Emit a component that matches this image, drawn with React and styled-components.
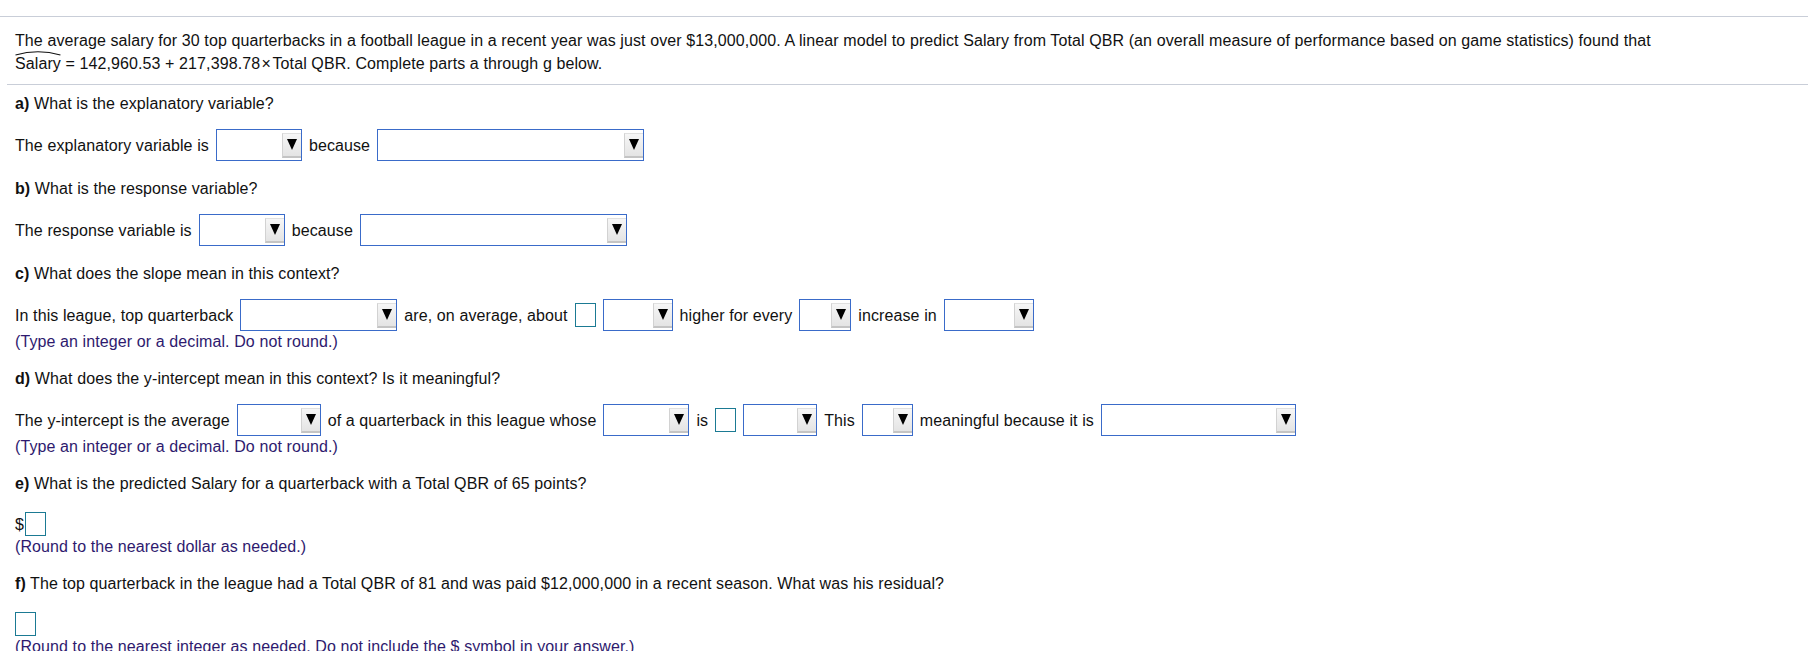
import React from "react";
import styled, { createGlobalStyle } from "styled-components";

const GlobalStyle = createGlobalStyle`
  body {
    margin: 0;
    background: #fff;
    font-family: "Liberation Sans", Arial, sans-serif;
    font-size: 16px;
    letter-spacing: 0.1px;
    color: #111;
  }
`;

// the question panel is a scroll viewport, cut at the bottom
const Viewport = styled.div`
  box-sizing: border-box;
  height: 651px;
  padding-top: 16px;
  overflow: hidden;
`;

const Page = styled.div`
  border-top: 1px solid #c9ced8;
`;

const Question = styled.div`
  margin-left: 7px;
  padding: 12px 8px 9px 8px;
  line-height: 23px;
  border-bottom: 1px solid #c9ced8;
`;

const Hatted = styled.span`
  position: relative;
  display: inline-block;
`;

const Hat = styled.svg`
  position: absolute;
  left: 0;
  top: -2px;
  width: 100%;
  height: 6px;
  overflow: visible;
`;

const Parts = styled.div`
  display: flex;
  flex-direction: column;
  gap: 18px;
  padding: 9px 14px 0 15px;
`;

const Part = styled.div`
  display: flex;
  flex-direction: column;
`;

const Heading = styled.div`
  line-height: 19px;
  b {
    font-weight: bold;
  }
`;

const Row = styled.div`
  display: flex;
  align-items: center;
  gap: ${(p) => (p.$tight ? 1 : 7)}px;
  height: ${(p) => (p.$compact ? 24 : 32)}px;
  margin-top: ${(p) => (p.$compact ? 19 : 16)}px;
  white-space: nowrap;
`;

const Text = styled.span`
  line-height: 19px;
`;

const Note = styled.div`
  line-height: 19px;
  margin-top: 1px;
  color: #2e1a6e;
`;

const Select = styled.div`
  box-sizing: border-box;
  width: ${(p) => p.$w}px;
  height: 32px;
  border: 1px solid #3a6bc9;
  background: #fff;
  display: flex;
  justify-content: flex-end;
  align-items: center;
`;

const ArrowButton = styled.div`
  box-sizing: border-box;
  width: 19px;
  height: 25px;
  background: linear-gradient(#f6f6f6, #e4e4e4);
  border-left: 1px solid #d2d2d2;
  border-top: 1px solid #e0e0e0;
  border-bottom: 2px solid #c4c4c4;
  display: flex;
  justify-content: center;
  align-items: center;

  &::after {
    content: "";
    width: 0;
    height: 0;
    border-left: 5.5px solid transparent;
    border-right: 5.5px solid transparent;
    border-top: 11px solid #000;
  }
`;

const AnswerBox = styled.div`
  box-sizing: border-box;
  width: 21px;
  height: 24px;
  border: 1px solid #1b7a93;
  background: #fff;
`;

const Dropdown = ({ width }) => (
  <Select $w={width}>
    <ArrowButton />
  </Select>
);

const App = () => {
  return (
    <>
      <GlobalStyle />
      <Viewport>
        <Page>
          <Question>
            The average salary for 30 top quarterbacks in a football league in a recent year was just over
            $13,000,000. A linear model to predict Salary from Total QBR (an overall measure of performance
            based on game statistics) found that
            <br />
            <Hatted>
              Salary
              <Hat viewBox="0 0 45 6" preserveAspectRatio="none">
                <path d="M0.5 5 Q22.5 -1.5 44.5 5" fill="none" stroke="#111" strokeWidth="1.1" />
              </Hat>
            </Hatted>
            {" = 142,960.53 + 217,398.78\u200a\u00d7\u200aTotal QBR. Complete parts a through g below."}
          </Question>

          <Parts>
            <Part>
              <Heading><b>a)</b> What is the explanatory variable?</Heading>
              <Row>
                <Text>The explanatory variable is</Text>
                <Dropdown width={86} />
                <Text>because</Text>
                <Dropdown width={267} />
              </Row>
            </Part>

            <Part>
              <Heading><b>b)</b> What is the response variable?</Heading>
              <Row>
                <Text>The response variable is</Text>
                <Dropdown width={86} />
                <Text>because</Text>
                <Dropdown width={267} />
              </Row>
            </Part>

            <Part>
              <Heading><b>c)</b> What does the slope mean in this context?</Heading>
              <Row>
                <Text>In this league, top quarterback</Text>
                <Dropdown width={157} />
                <Text>are, on average, about</Text>
                <AnswerBox />
                <Dropdown width={70} />
                <Text>higher for every</Text>
                <Dropdown width={52} />
                <Text>increase in</Text>
                <Dropdown width={90} />
              </Row>
              <Note>(Type an integer or a decimal. Do not round.)</Note>
            </Part>

            <Part>
              <Heading><b>d)</b> What does the y-intercept mean in this context? Is it meaningful?</Heading>
              <Row>
                <Text>The y-intercept is the average</Text>
                <Dropdown width={84} />
                <Text>of a quarterback in this league whose</Text>
                <Dropdown width={86} />
                <Text>is</Text>
                <AnswerBox />
                <Dropdown width={74} />
                <Text>This</Text>
                <Dropdown width={51} />
                <Text>meaningful because it is</Text>
                <Dropdown width={195} />
              </Row>
              <Note>(Type an integer or a decimal. Do not round.)</Note>
            </Part>

            <Part>
              <Heading><b>e)</b> What is the predicted Salary for a quarterback with a Total QBR of 65 points?</Heading>
              <Row $compact $tight>
                <Text>$</Text>
                <AnswerBox />
              </Row>
              <Note>(Round to the nearest dollar as needed.)</Note>
            </Part>

            <Part>
              <Heading>
                <b>f)</b> The top quarterback in the league had a Total QBR of 81 and was paid $12,000,000 in a
                recent season. What was his residual?
              </Heading>
              <Row $compact>
                <AnswerBox />
              </Row>
              <Note>(Round to the nearest integer as needed. Do not include the $ symbol in your answer.)</Note>
            </Part>
          </Parts>
        </Page>
      </Viewport>
    </>
  );
};

export default App;
